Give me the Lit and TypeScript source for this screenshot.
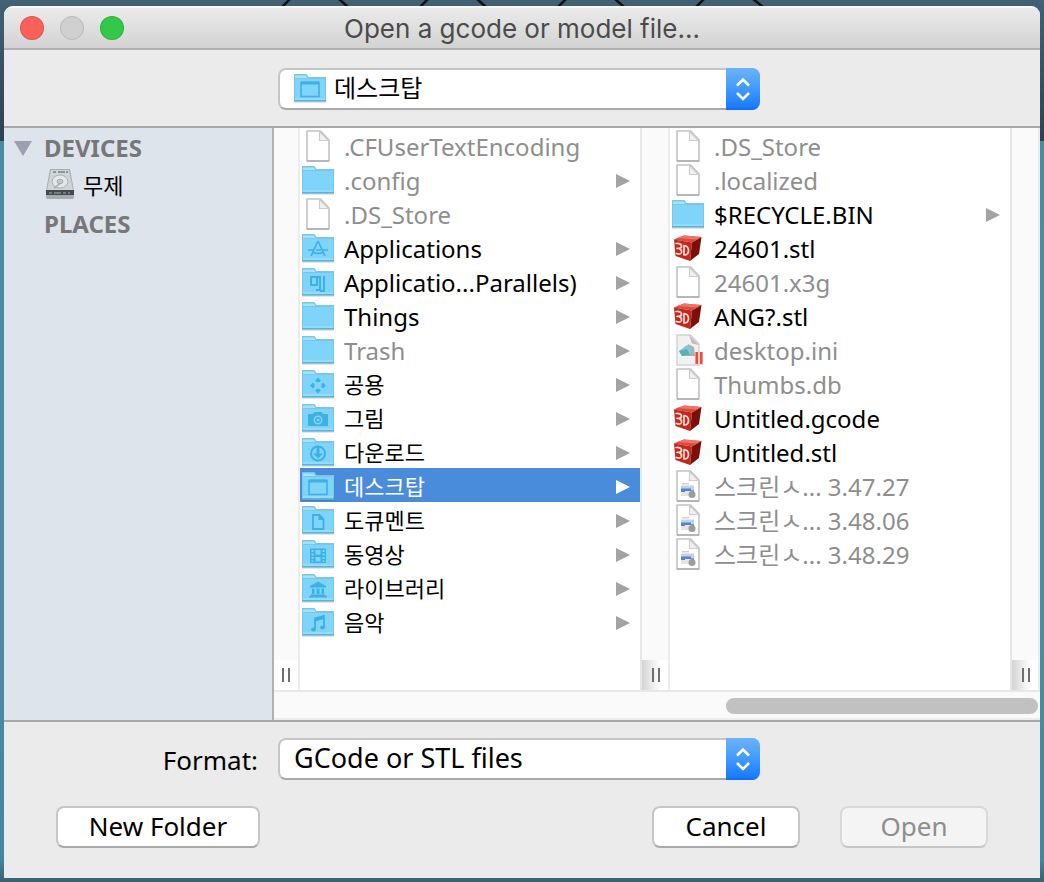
import { LitElement, html, svg, css, nothing, type TemplateResult } from "lit";
import { customElement, property, state } from "lit/decorators.js";
import { classMap } from "lit/directives/class-map.js";

type Entry = { name: string; icon: string; dim?: boolean; dir?: boolean };

const HOME: Entry[] = [
  { name: ".CFUserTextEncoding", icon: "file", dim: true },
  { name: ".config", icon: "folder", dim: true, dir: true },
  { name: ".DS_Store", icon: "file", dim: true },
  { name: "Applications", icon: "apps", dir: true },
  { name: "Applicatio...Parallels)", icon: "parallels", dir: true },
  { name: "Things", icon: "folder", dir: true },
  { name: "Trash", icon: "folder", dim: true, dir: true },
  { name: "공용", icon: "public", dir: true },
  { name: "그림", icon: "pictures", dir: true },
  { name: "다운로드", icon: "downloads", dir: true },
  { name: "데스크탑", icon: "desktop", dir: true },
  { name: "도큐멘트", icon: "documents", dir: true },
  { name: "동영상", icon: "movies", dir: true },
  { name: "라이브러리", icon: "library", dir: true },
  { name: "음악", icon: "music", dir: true },
];

const DESKTOP: Entry[] = [
  { name: ".DS_Store", icon: "file", dim: true },
  { name: ".localized", icon: "file", dim: true },
  { name: "$RECYCLE.BIN", icon: "folder", dir: true },
  { name: "24601.stl", icon: "model" },
  { name: "24601.x3g", icon: "file", dim: true },
  { name: "ANG?.stl", icon: "model" },
  { name: "desktop.ini", icon: "settings", dim: true },
  { name: "Thumbs.db", icon: "file", dim: true },
  { name: "Untitled.gcode", icon: "model" },
  { name: "Untitled.stl", icon: "model" },
  { name: "스크린ㅅ... 3.47.27", icon: "image", dim: true },
  { name: "스크린ㅅ... 3.48.06", icon: "image", dim: true },
  { name: "스크린ㅅ... 3.48.29", icon: "image", dim: true },
];

const INK = "#3fb0e2";

const folderBase = svg`
  <rect x="0" y="31" width="32" height="2" fill="#000" opacity=".1"/>
  <path d="M0 4h12.500l2 3H32v24.500H0z" fill="#7cc5e4"/>
  <path d="M1 5.500h11l1.500 2.500H1z" fill="#a4e3fc"/>
  <rect x="1" y="9" width="30" height="21" fill="#7fd5f9"/>
  <rect x="1" y="28.500" width="30" height="1" fill="#a5e2fa"/>
  <rect x="0" y="30" width="32" height="1.500" fill="#5fb4d6"/>`;

const page = svg`
  <path d="M5 3h13.500L27 12v21H5z" fill="#fff" stroke="#c2c2c2" stroke-width="1.600" stroke-linejoin="round"/>
  <path d="M17.500 3.500v9h9z" fill="#f1f1f1" stroke="#cdcdcd" stroke-width="1.200" stroke-linejoin="round"/>
  <path d="M5 33h22" stroke="#adadad" stroke-width="1.500"/>`;

const BADGES: Record<string, TemplateResult | typeof nothing> = {
  folder: nothing,
  apps: svg`<g fill="none" stroke="${INK}" stroke-width="1.700">
    <path d="M16 11 9 26M16 11l7 15M6 20h5M14 20h5M21 20h5M10 22q6 3 12 0"/></g>`,
  parallels: svg`<g fill="none" stroke="${INK}" stroke-width="2">
    <path d="M9 13h9v13h-4M9 12v9h6v-8M22 12v15h-4"/></g>`,
  public: svg`<path d="m16 13.500 6 6-6 6-6-6z" fill="none" stroke="${INK}" stroke-width="2.800"
    stroke-dasharray="5.500 2.985" stroke-dashoffset="2.750"/>`,
  pictures: svg`<path fill="${INK}" fill-rule="evenodd"
    d="M6 14h5l1.500-2h7l1.500 2h5v12H6zM16 15.500a4.500 4.500 0 1 0 0 9 4.500 4.500 0 0 0 0-9zm0 1.500a3 3 0 1 1 0 6 3 3 0 0 1 0-6z"/>
    <circle cx="16" cy="20" r="1.500" fill="#7fd5f9"/>`,
  downloads: svg`<circle cx="16" cy="19.500" r="7" fill="none" stroke="${INK}" stroke-width="2"/>
    <path d="M14.500 13h3v6.500h3.500l-5 5-5-5h3.500z" fill="${INK}"/>`,
  desktop: svg`<rect x="7" y="12.500" width="18" height="14" fill="none" stroke="${INK}" stroke-width="1.600"/>
    <path d="M7 13h18" stroke="${INK}" stroke-width="3"/>`,
  documents: svg`<path d="M11 13h6.500l4 4v10H11z" fill="none" stroke="${INK}" stroke-width="1.800"/>
    <path d="M16.500 12.500v5.500h5.500z" fill="${INK}"/>`,
  movies: svg`<path d="M8 12.500h16v14.500H8z" fill="${INK}"/>
    <g fill="#7fd5f9"><path d="M9.500 14h2v2h-2zM9.500 17.500h2v2h-2zM9.500 21h2v2h-2zM9.500 24.500h2v1.500h-2zM20.500 14h2v2h-2zM20.500 17.500h2v2h-2zM20.500 21h2v2h-2zM20.500 24.500h2v1.500h-2zM13.500 14h5v4.500h-5zM13.500 21h5v4.500h-5z"/></g>`,
  library: svg`<path fill="${INK}" d="m16 11.500 8 4.500v1.500H8V16zM10 18.500h2.500V24H10zM14.500 18.500h3V24h-3zM19.500 18.500H22V24h-2.500zM8.500 24.500h15V26H25v1.500H7V26h1.500z"/>`,
  music: svg`<path d="M13 25V14.500l9-2.500v11" fill="none" stroke="${INK}" stroke-width="1.800"/>
    <path d="M13 14.500l9-2.500v3l-9 2.500z" fill="${INK}"/>
    <ellipse cx="11.500" cy="25.500" rx="2.500" ry="2" fill="${INK}"/><ellipse cx="20.500" cy="23.500" rx="2.500" ry="2" fill="${INK}"/>`,
};

const FILES: Record<string, TemplateResult> = {
  file: page,
  model: svg`
    <path d="M12 5.500 29.500 7 20 12.500 1.500 9.500z" fill="#dd4b40"/>
    <path d="M12 5.500 29.500 7 25 9.500 5 8z" fill="#ec7468"/>
    <path d="M2 9.500 20 12.500 18 31 3.500 26z" fill="#c3281d"/>
    <path d="M20 12.500 29.500 7 27 24 18 31z" fill="#7d0f0a"/>
    <g fill="none" stroke="#f7d9d5" stroke-width="1.700" stroke-linejoin="round" stroke-linecap="round">
      <path d="M4 13.500q4.500-.5 5.500 2 .3 2.500-2.500 3 3 1 2.500 4-1 2.500-5 1M5 18.300h2M12 15.500q4.500.5 4.500 5t-4.500 4.500z"/></g>`,
  settings: svg`
    <path d="M5 3h13.500L27 12v21H5z" fill="#f1f1f1" stroke="#d2d2d2" stroke-width="1.500"/>
    <path d="m17 3 10 10-7-1.500z" fill="#bdbdbd"/>
    <path d="m16 12 6 3 1 9h-9z" fill="#aab1b2"/>
    <path d="m7 19 8-6 5 3-2 7-8 1z" fill="#84c8d1"/><path d="m7 19 8-2 3 6-8 1z" fill="#5fadb9"/>
    <path d="M23 20h8v13h-8z" fill="#f7d3cf"/>
    <path d="M23.500 20H26v12h-2.500zM28 20h2.500v12H28z" fill="#ee4a37"/>`,
  image: svg`${page}
    <path d="M10 15h7v1.500h-7z" fill="#e7cda9"/><path d="M9 17.500h13v6H9z" fill="#bcd2f2"/>
    <path d="M9 24v-3.500h10v2.500h-6v1z" fill="#5c82c0"/><path d="M9 24h8v4H9z" fill="#e3e4e6"/>
    <path d="M19 22.500h3V24h-3z" fill="#4a6fae"/>
    <circle cx="20" cy="26.500" r="3.500" fill="#9c9c9c"/>`,
};

function icon(kind: string) {
  return html`<svg class="icon" viewBox="0 0 32 34" aria-hidden="true">
    ${FILES[kind] ?? svg`${folderBase}${BADGES[kind]}`}
  </svg>`;
}

@customElement("popup-select")
class PopupSelect extends LitElement {
  @property() label = "";
  @property() icon = "";
  @property({ attribute: false }) options: string[] = [];

  static styles = css`
    :host { display: block; }
    .box { display: grid; grid-template-columns: 1fr 34px; height: 42px; }
    select {
      grid-area: 1 / 1 / 2 / 3; appearance: none; width: 100%; height: 42px; margin: 0;
      padding: 0 40px 2px 14px; border: 2px solid #c6c6c6; border-bottom-color: #a9a9a9; border-radius: 8px;
      background: #fff; color: #000; outline: none;
      font: 27px/34px "Noto Sans", "Noto Sans CJK KR", sans-serif;
    }
    .with-icon select { padding-left: 54px; font-size: 24px; }
    .icon { grid-area: 1 / 1; z-index: 1; pointer-events: none; width: 32px; height: 34px; margin: 2px 0 0 16px; }
    .knob {
      grid-area: 1 / 2; z-index: 1; pointer-events: none; width: 34px; height: 42px;
      border-radius: 0 8px 8px 0; background: linear-gradient(#6cb2f9, #4b9ffb 40%, #1a7dff 92%, #0f68fa);
    }
  `;

  render() {
    return html`<div class=${classMap({ box: true, "with-icon": !!this.icon })}>
      <select aria-label=${this.label}>
        ${this.options.map((o) => html`<option>${o}</option>`)}
      </select>
      ${this.icon ? icon(this.icon) : nothing}
      <svg class="knob" viewBox="0 0 34 42" aria-hidden="true">
        <path d="m11 17.500 6-6 6 6M11 25l6 6 6-6" fill="none" stroke="#fff" stroke-width="2.600"/>
      </svg>
    </div>`;
  }
}

@customElement("file-column")
class FileColumn extends LitElement {
  @property({ attribute: false }) entries: Entry[] = [];
  @property() label = "";
  @property({ type: Number }) selected = -1;

  static styles = css`
    :host { display: block; background: #fff; min-width: 0; overflow: hidden; }
    ul { list-style: none; margin: 0; padding: 0; }
    .row {
      display: flex; align-items: center; gap: 10px; width: 100%; height: 34px; margin: 0;
      padding: 0 10px 0 2px; border: 0; background: none; color: #000; text-align: left;
      font: 24px/34px "Noto Sans", "Noto Sans CJK KR", sans-serif;
    }
    .korean { font-size: 22px; }
    .dim { color: #8e8e8e; }
    .selected { background: #4a8cdc; color: #fff; }
    .icon { flex: none; width: 32px; height: 34px; }
    .name { flex: 1; min-width: 0; padding-top: 4px; white-space: nowrap; overflow: hidden; }
    .korean .name { padding-top: 2px; }
    .arrow { flex: none; width: 14px; height: 14px; margin-top: 4px; fill: #a3a3a3; }
    .selected .arrow { fill: #fff; }
  `;

  render() {
    return html`<ul aria-label=${this.label}>
      ${this.entries.map((e, i) => html`<li>
        <button class=${classMap({
          row: true,
          dim: !!e.dim,
          selected: i === this.selected,
          korean: /[가-힣]/.test(e.name) && !e.dim,
        })} @click=${() => { if (!e.dim) this.selected = i; }}>
          ${icon(e.icon)}
          <span class="name">${e.name}</span>
          ${e.dir ? html`<svg class="arrow" viewBox="0 0 14 14" aria-hidden="true"><path d="M0 0 14 7 0 14z"/></svg>` : nothing}
        </button>
      </li>`)}
    </ul>`;
  }
}

@customElement("app-root")
class AppRoot extends LitElement {
  @state() private devicesOpen = true;

  static styles = css`
    :host {
      display: block; box-sizing: border-box; min-height: 100vh; padding: 0 4px 4px;
      background: linear-gradient(#426175, #3a5364 60px, #2f4150 141px, #4a8ba2 141px, #4d8ca2 600px, #4585a0 860px, #3c6270 880px);
      font: 26px/34px "Noto Sans", "Noto Sans CJK KR", sans-serif; color: #000;
    }
    .wallpaper { display: block; width: 100%; height: 6px; }
    .window {
      display: grid; grid-template-rows: 44px 78px 1fr auto; min-height: calc(100vh - 10px);
      border-radius: 9px 9px 0 0; overflow: hidden; background: #ebebeb;
    }
    .titlebar {
      display: grid; grid-template-columns: 120px 1fr 120px; align-items: center; box-sizing: border-box;
      border-top: 2px solid #f6f6f6; border-bottom: 2px solid #b1b1b1; background: linear-gradient(#ebebeb, #d2d2d2);
    }
    .lights { display: flex; gap: 16px; padding-left: 16px; }
    .light { width: 24px; height: 24px; padding: 0; border: 1px solid #00000022; border-radius: 50%; }
    .close { background: #fc605b; }
    .minimize { background: #d0d0d0; border-color: #b8b8b8; }
    .zoom { background: #34c84a; }
    h1 { margin: 0; padding-top: 2px; text-align: center; font: 400 26px/34px Inter, sans-serif; color: #4b4b4b; }
    .toolbar {
      display: grid; grid-template-columns: 1fr 482px 1fr; align-items: center; box-sizing: border-box;
      padding: 2px 6px 0 0; border-bottom: 2px solid #a8a8a8;
    }
    .toolbar popup-select { grid-column: 2; }
    .body { display: grid; grid-template-columns: 270px 1fr; border-bottom: 2px solid #a8a8a8; }
    .sidebar { background: #dde4eb; border-right: 2px solid #b1b1b1; }
    .group, .device { display: flex; align-items: center; height: 38px; width: 100%; border: 0; padding: 0; margin: 0; background: none; }
    .group { gap: 12px; padding-left: 10px; box-sizing: border-box; padding-top: 2px; font: 700 24px/36px "Noto Sans", sans-serif; color: #777; }
    .twist { width: 18px; height: 15px; fill: #9c9fad; }
    .plain { padding-left: 40px; }
    .device { gap: 9px; padding: 0 0 2px 42px; font: 22px/34px "Noto Sans CJK KR", sans-serif; color: #000; }
    .drive { width: 28px; height: 30px; }
    .browser { display: grid; grid-template-rows: 1fr 30px; min-width: 0; }
    .columns { display: grid; grid-template-columns: 26px 1fr 30px 1fr 30px; }
    .gutter {
      display: flex; flex-direction: column; justify-content: flex-end; box-sizing: border-box;
      background: #fafafa; border-right: 2px solid #ececec; border-left: 2px solid #e6e6e6;
    }
    .first { border-left: 0; }
    .grip {
      display: flex; justify-content: flex-end; align-items: center; gap: 4px; height: 30px; padding-right: 8px;
      background: linear-gradient(90deg, #d4d4d4, #fff 70%);
    }
    .first .grip { background: #fff; }
    .bar { width: 2px; height: 14px; background: #6e6e6e; }
    .scroll { display: flex; justify-content: flex-end; align-items: center; background: #fafafa; border-top: 2px solid #e8e8e8; border-bottom: 2px solid #ededed; box-sizing: border-box; padding: 2px 2px 0; }
    .thumb { width: 41%; height: 16px; border-radius: 8px; background: #c1c1c1; }
    .footer { display: flex; flex-direction: column; gap: 26px; padding: 16px 0 30px; }
    .format { display: grid; grid-template-columns: 1fr 482px 1fr; align-items: center; padding-right: 6px; }
    .caption { text-align: right; padding-right: 20px; padding-top: 2px; }
    .actions { display: flex; gap: 40px; padding: 0 52px; }
    .btn {
      box-sizing: border-box; width: 148px; height: 42px; padding: 0 0 2px; border: 2px solid #c6c6c6; border-bottom-color: #a9a9a9;
      border-radius: 8px; background: #fff; color: #000; font: inherit;
    }
    .wide { width: 204px; margin-right: auto; }
    .btn:disabled { background: #f4f4f4; border-color: #d8d8d8; border-bottom-color: #c6c6c6; color: #8e8e8e; }
  `;

  private grip(first = false) {
    return html`<div class=${classMap({ gutter: true, first })}>
      <div class="grip"><span class="bar"></span><span class="bar"></span></div>
    </div>`;
  }

  render() {
    return html`
      <svg class="wallpaper" viewBox="0 0 1036 6" preserveAspectRatio="xMinYMin slice" aria-hidden="true">
        <path d="M278 7l8-8M335 -1l9 8M416 7l8-8M473 -1l9 8M554 7l8-8M611 -1l9 8M692 7l8-8M749 -1l10 8" fill="none" stroke="#111" stroke-width="2.500"/>
      </svg>
      <main class="window">
        <header class="titlebar">
          <div class="lights">
            <button class="light close" aria-label="Close"></button>
            <button class="light minimize" aria-label="Minimize" disabled></button>
            <button class="light zoom" aria-label="Zoom"></button>
          </div>
          <h1>Open a gcode or model file...</h1>
        </header>
        <div class="toolbar">
          <popup-select label="Location" icon="desktop" .options=${["데스크탑"]}></popup-select>
        </div>
        <div class="body">
          <nav class="sidebar">
            <button class="group" aria-expanded=${this.devicesOpen} @click=${() => { this.devicesOpen = !this.devicesOpen; }}>
              <svg class="twist" viewBox="0 0 18 15" aria-hidden="true"><path d="M0 0h18L9 15z"/></svg>DEVICES
            </button>
            ${this.devicesOpen ? html`<button class="device">
              <svg class="drive" viewBox="0 0 28 30" aria-hidden="true">
                <path d="M4 0h20l4 22v6q0 2-2 2H2q-2 0-2-2v-6z" fill="#a5adb0"/>
                <path d="M5 1h18l4 20H1z" fill="#cdd5d7"/>
                <path d="M7 3h3M12 3h7M20 3h2" stroke="#7a8183" stroke-width="1.500"/>
                <ellipse cx="14" cy="12.500" rx="8" ry="6.500" fill="#e3e9ea" stroke="#a9b2b4"/>
                <ellipse cx="14" cy="12.500" rx="3" ry="2.200" fill="#c3cdcf" stroke="#a0a9ab"/>
                <path d="M15 14 8 19" stroke="#a0a9ab" stroke-width="1.500"/>
                <path d="M0 21h28v5H0z" fill="#45494a"/>
                <path d="M3 24h3M8 24h7M17 24h3M22 24h2" stroke="#8c9092" stroke-width="1.500"/>
              </svg>무제
            </button>` : nothing}
            <div class="group plain">PLACES</div>
          </nav>
          <section class="browser">
            <div class="columns">
              ${this.grip(true)}
              <file-column label="Home" .entries=${HOME} .selected=${10}></file-column>
              ${this.grip()}
              <file-column label="Desktop" .entries=${DESKTOP}></file-column>
              ${this.grip()}
            </div>
            <div class="scroll"><div class="thumb"></div></div>
          </section>
        </div>
        <footer class="footer">
          <div class="format">
            <span class="caption">Format:</span>
            <popup-select label="Format" .options=${["GCode or STL files"]}></popup-select>
          </div>
          <div class="actions">
            <button class="btn wide">New Folder</button>
            <button class="btn">Cancel</button>
            <button class="btn" disabled>Open</button>
          </div>
        </footer>
      </main>`;
  }
}
